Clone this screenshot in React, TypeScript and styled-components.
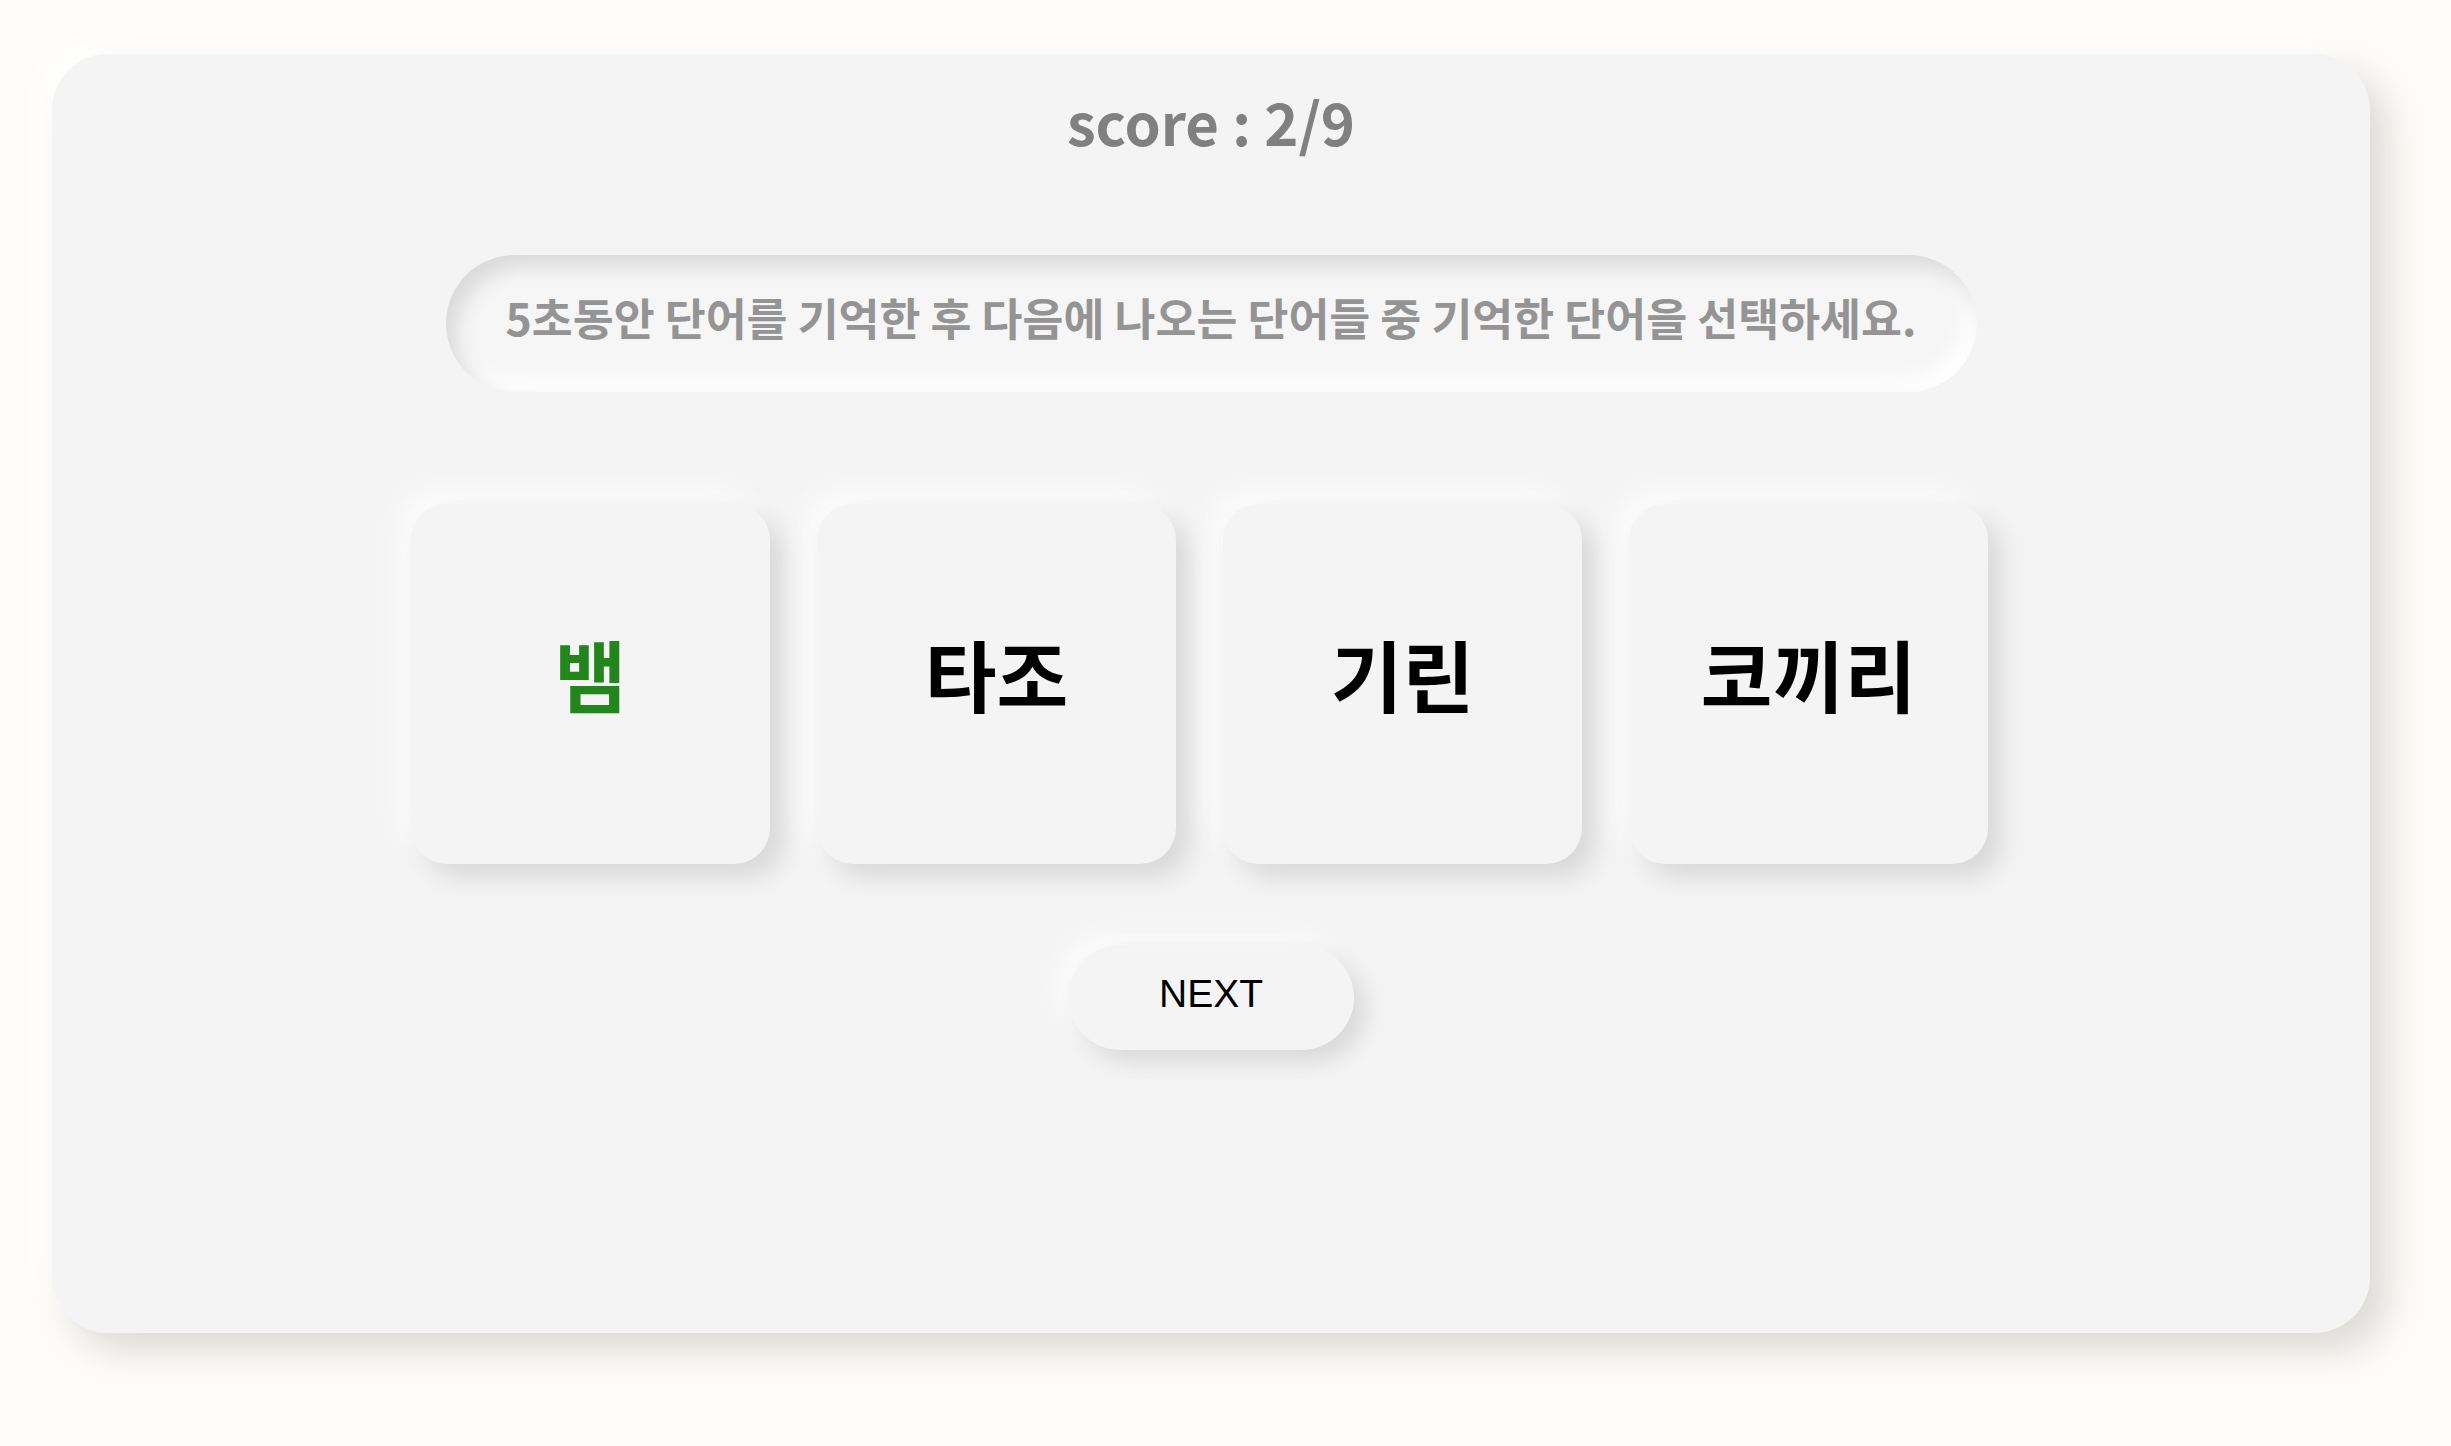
import styled, { createGlobalStyle } from "styled-components"

const GlobalStyle = createGlobalStyle`
  html, body {
    margin: 0;
    padding: 0;
    background: #fdfcf8;
  }
  body {
    font-family: "Noto Sans CJK KR", "Noto Sans", sans-serif;
  }
`

const Page = styled.main`
  width: 2451px;
  height: 1446px;
  padding: 54px 0 0 52px;
  box-sizing: border-box;
`

const Board = styled.section`
  width: 2318px;
  height: 1279px;
  box-sizing: border-box;
  padding-top: 36px;
  background: #f4f4f5;
  border-radius: 56px;
  box-shadow: 18px 18px 36px #dcdbd7, -14px -14px 28px #ffffff;
  display: flex;
  flex-direction: column;
  align-items: center;
`

const Score = styled.div`
  font-size: 58px;
  line-height: 62px;
  font-weight: 700;
  color: #808080;
`

const Guide = styled.div`
  margin-top: 103px;
  width: 1531px;
  height: 137px;
  box-sizing: border-box;
  padding-bottom: 14px;
  border-radius: 69px;
  background: #f6f6f6;
  box-shadow: inset 10px 12px 20px #dadada, inset -10px -12px 20px #ffffff;
  display: flex;
  align-items: center;
  justify-content: center;
  font-size: 44.5px;
  font-weight: 700;
  color: #949494;
`

const CardRow = styled.div`
  margin-top: 112px;
  display: flex;
  gap: 47px;
  padding-right: 23px;
`

const Card = styled.button<{ $correct?: boolean }>`
  width: 359px;
  height: 360px;
  box-sizing: border-box;
  padding: 0 0 22px;
  border: none;
  border-radius: 36px;
  background: #f4f4f4;
  box-shadow: 14px 14px 24px #d9d9d9, -14px -14px 24px #fbfbfb;
  display: flex;
  align-items: center;
  justify-content: center;
  font-family: "Noto Sans CJK KR", sans-serif;
  font-size: 78px;
  font-weight: 700;
  color: ${p => (p.$correct ? "#22861c" : "#000000")};
  cursor: pointer;
`

const NextButton = styled.button`
  margin-top: 81px;
  width: 286px;
  height: 105px;
  box-sizing: border-box;
  padding: 0 0 8px;
  border: none;
  border-radius: 53px;
  background: #f4f4f4;
  box-shadow: 12px 12px 22px #d9d9d9, -12px -12px 22px #fbfbfb;
  font-family: "Liberation Sans", Arial, sans-serif;
  font-size: 39px;
  color: #000000;
  cursor: pointer;
`

const words = ["뱀", "타조", "기린", "코끼리"]

export default function App() {
  return (
    <Page>
      <GlobalStyle />
      <Board>
        <Score>score : 2/9</Score>
        <Guide>5초동안 단어를 기억한 후 다음에 나오는 단어들 중 기억한 단어을 선택하세요.</Guide>
        <CardRow>
          {words.map((w, i) => (
            <Card key={w} $correct={i === 0}>{w}</Card>
          ))}
        </CardRow>
        <NextButton>NEXT</NextButton>
      </Board>
    </Page>
  )
}
